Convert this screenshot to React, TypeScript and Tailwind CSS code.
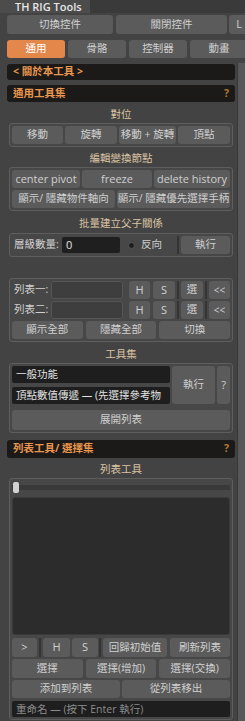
import type { ReactNode } from 'react'

function Btn({ children, className = '' }: { children: ReactNode; className?: string }) {
  return (
    <div
      className={`flex items-center justify-center shrink-0 rounded-[3px] bg-[#5b5b5b] text-[#d0d0d0] whitespace-nowrap overflow-hidden ${className}`}
    >
      {children}
    </div>
  )
}

function Header({ title, help = false, className = '' }: { title: string; help?: boolean; className?: string }) {
  return (
    <div
      className={`flex items-center justify-between w-[228px] rounded-[3px] bg-[#1c1a18] pl-[6px] pr-[6px] text-[10.5px] font-bold text-[#e8964e] ${className}`}
    >
      <span>{title}</span>
      {help && <span className="text-[#b8782f]">?</span>}
    </div>
  )
}

function Label({ text, className = '' }: { text: string; className?: string }) {
  return (
    <div className={`w-[228px] text-center text-[10.5px] leading-[13px] text-[#dcc4a4] ${className}`}>{text}</div>
  )
}

function Sep({ className = '' }: { className?: string }) {
  return <div className={`shrink-0 w-[2px] bg-[#343434] ${className}`} />
}

export default function App() {
  return (
    <div className="w-[245px] h-[721px] overflow-hidden bg-[#434343] flex flex-col font-['Open_Sans','Noto_Sans_CJK_TC',sans-serif] text-[10.5px]">
      {/* window title */}
      <div className="flex h-[13px] shrink-0 bg-[#3a3a3a]">
        <div className="flex items-center w-[90px] h-[13px] bg-[#4c4c4c] pl-[15px] text-[11px] leading-[13px] font-semibold text-[#e6e6e6] whitespace-nowrap">
          TH RIG Tools
        </div>
      </div>

      {/* top buttons */}
      <div className="flex shrink-0 mt-[2px] pl-[7px] h-[19px]">
        <Btn className="w-[106px] h-[19px]">切換控件</Btn>
        <Btn className="w-[111px] h-[19px] ml-[3px]">關閉控件</Btn>
        <Btn className="w-[20px] h-[19px] ml-[2px] text-[11px]">L</Btn>
      </div>

      {/* tabs */}
      <div className="flex shrink-0 mt-[6px] pl-[7px] gap-[3px] h-[18px]">
        <div className="flex items-center justify-center shrink-0 w-[58px] h-[18px] rounded-[3px] bg-[#e4874a] text-white">通用</div>
        <Btn className="w-[58px] h-[18px]">骨骼</Btn>
        <Btn className="w-[58px] h-[18px]">控制器</Btn>
        <Btn className="w-[58px] h-[18px]">動畫</Btn>
      </div>

      {/* scroll area */}
      <div className="flex flex-1 mt-[5px] min-h-0">
        <div className="w-[237px] shrink-0 pl-[7px] flex flex-col">
          <Header title="< 關於本工具 >" className="h-[16px] mt-[1px]" />
          <Header title="通用工具集" help className="h-[17px] mt-[5px]" />

          <Label text="對位" className="pt-[6px] h-[21px]" />
          <div className="ml-[2px] w-[224px] border border-[#5e5e5e] rounded-[3px] bg-[#474747] p-[2px] flex gap-[2px]">
            <Btn className="w-[51px] h-[18px]">移動</Btn>
            <Btn className="w-[52px] h-[18px]">旋轉</Btn>
            <Btn className="w-[57px] h-[18px]">移動 + 旋轉</Btn>
            <Btn className="flex-1 h-[18px]">頂點</Btn>
          </div>

          <Label text="編輯變換節點" className="pt-[5px] h-[20px]" />
          <div className="ml-[2px] w-[224px] border border-[#5e5e5e] rounded-[3px] bg-[#474747] p-[2px] flex flex-col gap-[2px]">
            <div className="flex gap-[2px]">
              <Btn className="w-[68px] h-[18px] text-[11px]">center pivot</Btn>
              <Btn className="w-[70px] h-[18px] text-[11px]">freeze</Btn>
              <Btn className="flex-1 h-[18px] text-[11px]">delete history</Btn>
            </div>
            <div className="flex gap-[2px]">
              <Btn className="w-[103px] h-[18px]">顯示/ 隱藏物件軸向</Btn>
              <Btn className="flex-1 h-[18px]">顯示/ 隱藏優先選擇手柄</Btn>
            </div>
          </div>

          <Label text="批量建立父子關係" className="pt-[6px] h-[22px]" />
          <div className="ml-[2px] w-[224px] border border-[#5e5e5e] rounded-[3px] bg-[#474747] p-[2px] flex items-center">
            <div className="w-[48px] pl-[2px] text-[#d0d0d0] whitespace-nowrap">層級數量:</div>
            <div className="ml-[2px] w-[58px] h-[16px] rounded-[2px] bg-[#1f1f1f] pl-[4px] text-[11px] leading-[16px] text-[#e4e4e4]">0</div>
            <div className="ml-[8px] w-[7px] h-[7px] rounded-full bg-[#1e1e1e] border border-[#555]" />
            <div className="ml-[6px] text-[#d0d0d0]">反向</div>
            <div className="flex-1" />
            <Sep className="h-[18px]" />
            <Btn className="w-[49px] h-[18px] ml-[2px]">執行</Btn>
          </div>

          <div className="ml-[2px] mt-[21px] w-[224px] border border-[#5e5e5e] rounded-[3px] bg-[#474747] p-[2px] flex flex-col gap-[2px]">
            {['列表一:', '列表二:'].map((t) => (
              <div key={t} className="flex items-center h-[18px]">
                <div className="w-[37px] pl-[2px] text-[#d0d0d0] whitespace-nowrap">{t}</div>
                <div className="ml-[2px] w-[72px] h-[18px] rounded-[3px] bg-[#3e3e3e] border border-[#555]" />
                <Btn className="ml-[6px] w-[21px] h-[18px] text-[11px]">H</Btn>
                <Btn className="ml-[3px] w-[22px] h-[18px] text-[11px]">S</Btn>
                <Sep className="ml-[2px] h-[18px]" />
                <Btn className="ml-[2px] w-[22px] h-[18px]">選</Btn>
                <Sep className="ml-[2px] h-[18px]" />
                <Btn className="ml-[2px] w-[21px] h-[18px] text-[10px]">&lt;&lt;</Btn>
              </div>
            ))}
            <div className="grid grid-cols-3 gap-[3px]">
              <Btn className="h-[18px]">顯示全部</Btn>
              <Btn className="h-[18px]">隱藏全部</Btn>
              <Btn className="h-[18px]">切換</Btn>
            </div>
          </div>

          <Label text="工具集" className="pt-[6px] h-[21px]" />
          <div className="ml-[2px] w-[224px] border border-[#5e5e5e] rounded-[3px] bg-[#474747] p-[2px] flex flex-col">
            <div className="flex h-[38px]">
              <div className="w-[158px] flex flex-col gap-[4px]">
                <div className="h-[17px] rounded-[2px] bg-[#1e1e1e] pl-[4px] leading-[17px] text-[#e2e2e2]">一般功能</div>
                <div className="h-[17px] rounded-[2px] bg-[#1e1e1e] pl-[4px] leading-[17px] text-[#e2e2e2] whitespace-nowrap overflow-hidden">
                  頂點數值傳遞 — (先選擇參考物
                </div>
              </div>
              <Btn className="ml-[2px] w-[43px] h-[38px]">執行</Btn>
              <Btn className="ml-[2px] flex-1 h-[38px] text-[11px]">?</Btn>
            </div>
            <Btn className="mt-[6px] h-[20px]">展開列表</Btn>
          </div>

          <Header title="列表工具/ 選擇集" help className="h-[18px] mt-[7px]" />

          <Label text="列表工具" className="pt-[5px] h-[20px]" />
          <div className="ml-[2px] w-[224px] border border-[#5e5e5e] rounded-[3px] bg-[#474747] p-[2px] flex flex-col">
            <div className="relative h-[13px] flex items-center">
              <div className="w-full h-[5px] bg-[#393939]" />
              <div className="absolute left-[1px] top-[1px] w-[6px] h-[11px] rounded-[2px] bg-[#d2d2d2]" />
            </div>
            <div className="mt-[3px] h-[138px] rounded-[3px] bg-[#2c2c2c] border border-[#3a3a3a]" />
            <div className="mt-[3px] flex items-center h-[19px]">
              <Btn className="w-[25px] h-[19px] text-[11px]">&gt;</Btn>
              <Sep className="ml-[2px] h-[19px]" />
              <Btn className="ml-[2px] w-[27px] h-[19px] text-[11px]">H</Btn>
              <Btn className="ml-[2px] w-[26px] h-[19px] text-[11px]">S</Btn>
              <Sep className="ml-[1px] h-[19px]" />
              <Btn className="ml-[2px] w-[64px] h-[19px]">回歸初始值</Btn>
              <Btn className="ml-[3px] flex-1 h-[19px]">刷新列表</Btn>
            </div>
            <div className="mt-[2px] grid grid-cols-3 gap-[3px]">
              <Btn className="h-[19px]">選擇</Btn>
              <Btn className="h-[19px]">選擇(增加)</Btn>
              <Btn className="h-[19px]">選擇(交換)</Btn>
            </div>
            <div className="mt-[2px] grid grid-cols-2 gap-[2px]">
              <Btn className="h-[18px]">添加到列表</Btn>
              <Btn className="h-[18px]">從列表移出</Btn>
            </div>
            <div className="mt-[3px] h-[16px] rounded-[2px] bg-[#1e1e1e] pl-[4px] leading-[16px] text-[#8c8c8c] whitespace-nowrap overflow-hidden">
              重命名 — (按下 Enter 執行)
            </div>
          </div>
        </div>

        {/* scrollbar */}
        <div className="w-[8px] shrink-0 border-l border-[#383838] bg-[#575757]" />
      </div>
    </div>
  )
}
